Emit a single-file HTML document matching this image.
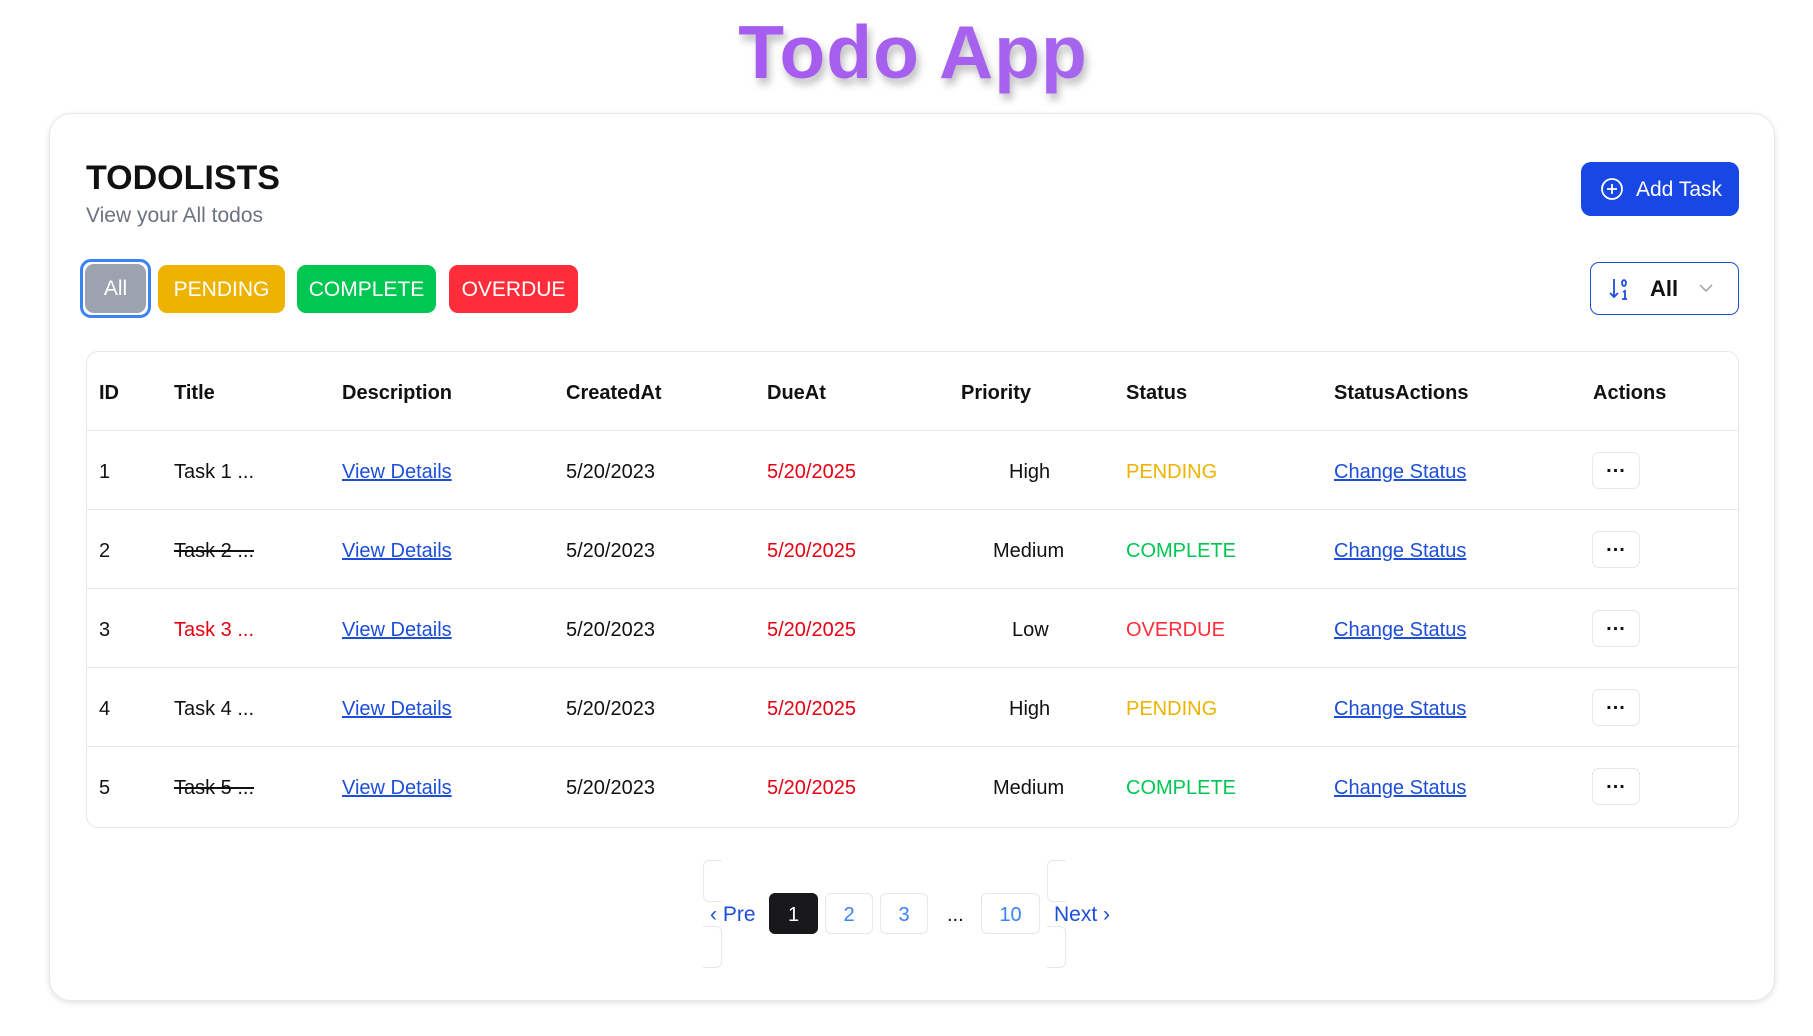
<!DOCTYPE html>
<html><head><meta charset="utf-8"><style>
*{box-sizing:border-box;margin:0;padding:0}
body{width:1813px;height:1036px;background:#fff;font-family:"Liberation Sans",sans-serif;position:relative;overflow:hidden;color:#111}
.abs{position:absolute}
h1{position:absolute;left:0;width:1826px;top:9px;text-align:center;font-size:75px;font-weight:bold;letter-spacing:1px;background:linear-gradient(90deg,#a745f5,#a67be8);-webkit-background-clip:text;color:transparent;filter:drop-shadow(3px 6px 4px rgba(0,0,0,.25))}
.card{left:49px;top:113px;width:1726px;height:888px;border:1px solid #e5e7eb;border-radius:22px;box-shadow:0 2px 6px rgba(0,0,0,.12)}
.fb{position:absolute;top:265px;height:48px;border-radius:9px;color:#fff;font-size:21px;line-height:50px;text-align:center}
.table{left:86px;top:351px;width:1653px;height:477px;border:1px solid #e5e7eb;border-radius:12px}
.row{position:absolute;left:0;width:1651px;height:79px;border-bottom:1px solid #e5e7eb;font-size:20px}
.row:last-child{border-bottom:none}
.row span{position:absolute;top:2px;line-height:79px;white-space:nowrap}
.hd span{font-weight:bold}
a{color:#1d4ed8;text-decoration:underline}
.dots{position:absolute;left:1505px;top:21px;width:48px;height:37px;border:1px solid #e5e7eb;border-radius:7px;text-align:center;line-height:26px;font-weight:bold;font-size:20px;letter-spacing:1px}
.pg{position:absolute;top:893px;height:41px;border:1px solid #e5e7eb;border-radius:6px;text-align:center;line-height:42px;font-size:20px;color:#3b82f6}
</style></head><body>
<h1>Todo App</h1>
<div class="abs card"></div>
<div class="abs" style="left:86px;top:159px;font-size:34px;font-weight:bold">TODOLISTS</div>
<div class="abs" style="left:86px;top:204px;font-size:21px;color:#6b7280">View your All todos</div>
<div class="abs" style="left:1581px;top:162px;width:158px;height:54px;background:#1847e5;border-radius:10px;color:#fff;font-size:21px;line-height:56px;padding-left:55px">Add Task
<svg class="abs" style="left:19px;top:15px" width="24" height="24" viewBox="0 0 24 24" fill="none" stroke="#fff" stroke-width="1.8"><circle cx="12" cy="12" r="10"/><path d="M12 7v10M7 12h10"/></svg></div>
<div class="abs" style="left:80px;top:259px;width:71px;height:59px;border:3px solid #3b82f6;border-radius:11px"></div>
<div class="fb" style="left:85px;width:61px;height:49px;top:264px;background:#9ca3af">All</div>
<div class="fb" style="left:158px;width:127px;background:#eeb300">PENDING</div>
<div class="fb" style="left:297px;width:139px;background:#00c752">COMPLETE</div>
<div class="fb" style="left:449px;width:129px;background:#ff2d3a">OVERDUE</div>
<div class="abs" style="left:1590px;top:262px;width:149px;height:53px;border:1.5px solid #1d4ed8;border-radius:9px">
<svg class="abs" style="left:18px;top:14px" width="22" height="24" viewBox="0 0 22 24" fill="none" stroke="#1d4ed8" stroke-width="1.8"><path d="M5 2v18M1 16l4 4 4-4"/><ellipse cx="15" cy="6" rx="2" ry="3"/><path d="M14 15l2-1v8M13 22h5"/></svg>
<span class="abs" style="left:59px;top:13px;font-size:22px;font-weight:bold">All</span>
<svg class="abs" style="left:108px;top:20px" width="14" height="10" viewBox="0 0 14 10" fill="none" stroke="#9ca3af" stroke-width="1.5"><path d="M1 2l6 6 6-6"/></svg></div>
<div class="abs table">
<div class="row hd" style="top:0"><span style="left:12px">ID</span><span style="left:87px">Title</span><span style="left:255px">Description</span><span style="left:479px">CreatedAt</span><span style="left:680px">DueAt</span><span style="left:874px">Priority</span><span style="left:1039px">Status</span><span style="left:1247px">StatusActions</span><span style="left:1506px">Actions</span></div>
<div class="row" style="top:79px"><span style="left:12px">1</span><span style="left:87px">Task 1 ...</span><span style="left:255px"><a>View Details</a></span><span style="left:479px">5/20/2023</span><span style="left:680px;color:#e60012">5/20/2025</span><span style="left:922px">High</span><span style="left:1039px;color:#eeb300">PENDING</span><span style="left:1247px"><a>Change Status</a></span><div class="dots">...</div></div>
<div class="row" style="top:158px"><span style="left:12px">2</span><span style="left:87px;text-decoration:line-through">Task 2 ...</span><span style="left:255px"><a>View Details</a></span><span style="left:479px">5/20/2023</span><span style="left:680px;color:#e60012">5/20/2025</span><span style="left:906px">Medium</span><span style="left:1039px;color:#00c752">COMPLETE</span><span style="left:1247px"><a>Change Status</a></span><div class="dots">...</div></div>
<div class="row" style="top:237px"><span style="left:12px">3</span><span style="left:87px;color:#e60012">Task 3 ...</span><span style="left:255px"><a>View Details</a></span><span style="left:479px">5/20/2023</span><span style="left:680px;color:#e60012">5/20/2025</span><span style="left:925px">Low</span><span style="left:1039px;color:#ff2d3a">OVERDUE</span><span style="left:1247px"><a>Change Status</a></span><div class="dots">...</div></div>
<div class="row" style="top:316px"><span style="left:12px">4</span><span style="left:87px">Task 4 ...</span><span style="left:255px"><a>View Details</a></span><span style="left:479px">5/20/2023</span><span style="left:680px;color:#e60012">5/20/2025</span><span style="left:922px">High</span><span style="left:1039px;color:#eeb300">PENDING</span><span style="left:1247px"><a>Change Status</a></span><div class="dots">...</div></div>
<div class="row" style="top:395px"><span style="left:12px">5</span><span style="left:87px;text-decoration:line-through">Task 5 ...</span><span style="left:255px"><a>View Details</a></span><span style="left:479px">5/20/2023</span><span style="left:680px;color:#e60012">5/20/2025</span><span style="left:906px">Medium</span><span style="left:1039px;color:#00c752">COMPLETE</span><span style="left:1247px"><a>Change Status</a></span><div class="dots">...</div></div>
</div>
<div class="abs" style="left:703px;top:860px;width:19px;height:42px;border:1px solid #e5e7eb;border-right:none;border-radius:6px 0 0 6px"></div>
<div class="abs" style="left:703px;top:926px;width:19px;height:42px;border:1px solid #e5e7eb;border-left:none;border-radius:0 6px 6px 0"></div>
<div class="abs" style="left:1047px;top:860px;width:19px;height:42px;border:1px solid #e5e7eb;border-right:none;border-radius:6px 0 0 6px"></div>
<div class="abs" style="left:1047px;top:926px;width:19px;height:42px;border:1px solid #e5e7eb;border-left:none;border-radius:0 6px 6px 0"></div>
<div class="abs" style="left:710px;top:903px;font-size:21px;color:#1d4ed8">‹ Pre</div>
<div class="pg" style="left:769px;width:49px;background:#18181b;color:#fff;border-color:#18181b">1</div>
<div class="pg" style="left:825px;width:48px">2</div>
<div class="pg" style="left:880px;width:48px">3</div>
<div class="abs" style="left:947px;top:904px;font-size:20px">...</div>
<div class="pg" style="left:981px;width:59px">10</div>
<div class="abs" style="left:1054px;top:903px;font-size:21px;color:#1d4ed8">Next ›</div>
</body></html>
